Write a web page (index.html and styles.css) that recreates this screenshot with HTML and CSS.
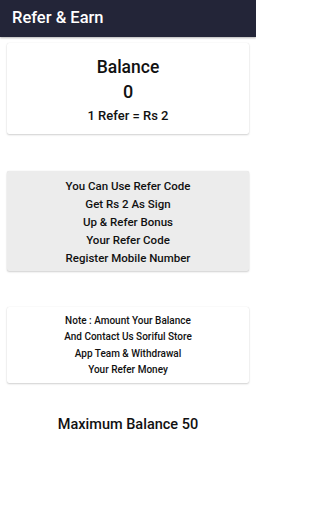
FILE: index.html
```html
<!DOCTYPE html>
<html>
<head>
<meta charset="utf-8">
<link rel="stylesheet" href="styles.css">
</head>
<body>
<header class="topbar">Refer &amp; Earn</header>
<main class="content">
  <section class="card balance">
    <div class="title">Balance</div>
    <div class="amount">0</div>
    <div class="rate">1 Refer = Rs 2</div>
  </section>
  <section class="card info">
    <div>You Can Use Refer Code</div>
    <div>Get Rs 2 As Sign</div>
    <div>Up &amp; Refer Bonus</div>
    <div>Your Refer Code</div>
    <div>Register Mobile Number</div>
  </section>
  <section class="card note">
    <div>Note : Amount Your Balance</div>
    <div>And Contact Us Soriful Store</div>
    <div>App Team &amp; Withdrawal</div>
    <div>Your Refer Money</div>
  </section>
  <div class="max">Maximum Balance 50</div>
</main>
</body>
</html>
```
FILE: styles.css
```css
* { box-sizing: border-box; }
html, body { margin: 0; padding: 0; }
body {
  width: 256px;
  height: 512px;
  background: #ffffff;
  font-family: Roboto, "Liberation Sans", sans-serif;
  color: #111111;
  overflow: hidden;
}
.topbar {
  height: 37px;
  background: #232538;
  color: #ffffff;
  font-size: 16.5px;
  font-weight: 500;
  padding: 8px 0 0 12px;
  box-shadow: 0 1px 2px rgba(0,0,0,0.3);
}
.content {
  display: flex;
  flex-direction: column;
  padding: 6px 7px 0 7px;
}
.card {
  background: #ffffff;
  border-radius: 2px;
  box-shadow: 0 1px 2px rgba(0,0,0,0.18), 0 0 1px rgba(0,0,0,0.12);
  text-align: center;
  font-weight: 500;
}
.balance {
  height: 91px;
  padding-top: 12px;
}
.balance .title { font-size: 17.5px; line-height: 24px; }
.balance .amount { font-size: 18px; line-height: 26px; }
.balance .rate { font-size: 13px; line-height: 22px; }
.info {
  margin-top: 37px;
  height: 100px;
  background: #ececec;
  padding-top: 6px;
  font-size: 11.5px;
  line-height: 18px;
}
.note {
  margin-top: 36px;
  height: 76px;
  padding-top: 6px;
  font-size: 10px;
  line-height: 16.3px;
}
.max {
  margin-top: 33px;
  text-align: center;
  font-size: 14.5px;
  font-weight: 500;
}
```
